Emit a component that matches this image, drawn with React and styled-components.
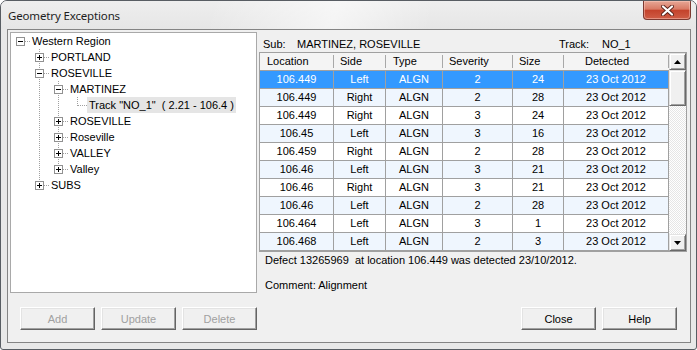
import React from "react";
import styled, { createGlobalStyle } from "styled-components";

const GlobalStyle = createGlobalStyle`
  html, body {
    margin: 0;
    padding: 0;
    background: #ffffff;
    overflow: hidden;
  }
  body {
    font-family: "Liberation Sans", Arial, sans-serif;
    font-size: 11px;
    color: #000;
  }
  * {
    box-sizing: border-box;
  }
`;

const Window = styled.div`
  width: 697px;
  height: 350px;
  border: 1px solid #585d63;
  border-radius: 7px 7px 3px 3px;
  background: #e8e8e8;
  display: flex;
  flex-direction: column;
  overflow: hidden;
`;

const TitleBar = styled.div`
  height: 28px;
  flex: none;
  display: flex;
  align-items: flex-start;
  justify-content: space-between;
  padding: 0 5px 0 7px;
  background: linear-gradient(
      105deg,
      rgba(255, 255, 255, 0) 30%,
      rgba(255, 255, 255, 0.55) 48%,
      rgba(255, 255, 255, 0) 62%
    ),
    linear-gradient(#eeeeee, #e6e6e6);
`;

const Title = styled.div`
  font-family: "Noto Sans", "Liberation Sans", sans-serif;
  font-size: 11.5px;
  letter-spacing: -0.15px;
  line-height: 29px;
  color: #1e1e1e;
`;

const CloseButton = styled.div`
  width: 48px;
  height: 19px;
  border: 1px solid #7d3a31;
  border-top: none;
  border-radius: 0 0 4px 4px;
  background: linear-gradient(#e7a796 0%, #d97a65 45%, #c4432c 52%, #cf5d46 100%);
  box-shadow: inset 0 0 0 1px rgba(255, 210, 200, 0.45);
  display: flex;
  align-items: center;
  justify-content: center;
`;

const Client = styled.div`
  flex: 1;
  margin: 0 5px 6px 6px;
  border: 1px solid #848484;
  background: #f0f0f0;
  padding: 2px 2px 0 2px;
  display: flex;
  flex-direction: column;
`;

const TopArea = styled.div`
  display: flex;
  height: 261px;
  gap: 2px;
`;

const TreePanel = styled.div`
  width: 247px;
  height: 261px;
  border: 1px solid #a9a9a9;
  background: #ffffff;
`;

const TreeRow = styled.div`
  display: flex;
  height: 16px;
  align-items: center;
`;

const TreeCell = styled.svg`
  flex: none;
  display: block;
`;

const TreeLabel = styled.span`
  line-height: 16px;
  padding: 0 2px;
  white-space: pre;
  background: ${(p) => (p.$selected ? "#e5e5e5" : "transparent")};
`;

const RightPanel = styled.div`
  width: 428px;
  display: flex;
  flex-direction: column;
`;

const SubRow = styled.div`
  height: 20px;
  padding: 4px 0 0 4px;
  line-height: 16px;
  display: grid;
  grid-template-columns: 34px 1fr 43px 85px;
`;

const Grid = styled.div`
  height: 200px;
  border: 1px solid #a0a0a0;
  display: flex;
`;

const Table = styled.div`
  width: 409px;
  display: grid;
  grid-template-columns: 74px 52px 57px 70px 51px 105px;
  grid-auto-rows: 18px;
`;

const HeadCell = styled.div`
  background: #f4f4f4;
  border-bottom: 1px solid #a0a0a0;
  padding-left: ${(p) => p.$pad || 6}px;
  line-height: 17px;
  position: relative;
  &::after {
    content: "";
    position: absolute;
    right: 0;
    top: 2px;
    bottom: 2px;
    width: 1px;
    background: #a8a8a8;
  }
`;

const Cell = styled.div`
  border-right: 1px solid #a0a0a0;
  border-bottom: 1px solid #a0a0a0;
  text-align: center;
  line-height: 17px;
  background: ${(p) => (p.$selected ? "#3399ff" : p.$alt ? "#eff6fe" : "#ffffff")};
  color: ${(p) => (p.$selected ? "#ffffff" : "#000")};
`;

const ScrollBar = styled.div`
  width: 17px;
  display: flex;
  flex-direction: column;
  background: repeating-conic-gradient(#ffffff 0 25%, #e6e6e6 0 50%) 0 0 / 2px 2px;
`;

const ScrollButton = styled.div`
  height: ${(p) => p.$h}px;
  flex: none;
  background: #f0f0f0;
  border: 1px solid;
  border-color: #e3e3e3 #696969 #696969 #e3e3e3;
  box-shadow: inset 1px 1px #ffffff, inset -1px -1px #a0a0a0;
  display: flex;
  align-items: center;
  justify-content: center;
`;

const ScrollTrack = styled.div`
  flex: 1;
`;

const InfoLine = styled.div`
  line-height: 16px;
  padding-left: 6px;
  margin-top: ${(p) => p.$mt || 0}px;
  white-space: pre;
`;

const ButtonRow = styled.div`
  display: flex;
  margin-top: 14px;
  padding: 0 11px 0 10px;
  gap: 6px;
`;

const Spacer = styled.div`
  flex: 1;
`;

const Button = styled.div`
  width: 75px;
  height: 23px;
  background: #f0f0f0;
  border: 1px solid;
  border-color: #ffffff #646464 #646464 #ffffff;
  box-shadow: inset -1px -1px #a0a0a0, inset 1px 1px #e3e3e3;
  color: ${(p) => (p.$disabled ? "#a0a0a0" : "#000")};
  display: flex;
  align-items: center;
  justify-content: center;
`;

const tree = [
  {
    label: "Western Region",
    open: true,
    children: [
      { label: "PORTLAND", children: [] },
      {
        label: "ROSEVILLE",
        open: true,
        children: [
          {
            label: "MARTINEZ",
            open: true,
            children: [{ label: 'Track "NO_1"  ( 2.21 - 106.4 )', selected: true }],
          },
          { label: "ROSEVILLE", children: [] },
          { label: "Roseville", children: [] },
          { label: "VALLEY", children: [] },
          { label: "Valley", children: [] },
        ],
      },
      { label: "SUBS", children: [] },
    ],
  },
];

function flatten(nodes, level, guides, out) {
  nodes.forEach((n, i) => {
    const last = i === nodes.length - 1;
    out.push({ ...n, level, last, guides });
    if (n.open && n.children) {
      flatten(n.children, level + 1, level === 0 ? [] : [...guides, !last], out);
    }
  });
  return out;
}

const DOT = "#a0a0a0";

function Guide({ line }) {
  return (
    <TreeCell width="19" height="16" shapeRendering="crispEdges">
      {line && <line x1="9.5" y1="0" x2="9.5" y2="16" stroke={DOT} strokeDasharray="1 1" />}
    </TreeCell>
  );
}

function Connector({ level, last, children, open }) {
  const box = !!children;
  return (
    <TreeCell width="19" height="16" shapeRendering="crispEdges">
      {level > 0 && (
        <line x1="9.5" y1="0" x2="9.5" y2={last ? 9 : 16} stroke={DOT} strokeDasharray="1 1" />
      )}
      <line x1={box ? 14 : 10} y1="8.5" x2="19" y2="8.5" stroke={DOT} strokeDasharray="1 1" />
      {box && (
        <>
          <rect x="5.5" y="4.5" width="8" height="8" fill="#fff" stroke="#919191" />
          <line x1="7" y1="8.5" x2="12" y2="8.5" stroke="#000" />
          {!open && <line x1="9.5" y1="6" x2="9.5" y2="11" stroke="#000" />}
        </>
      )}
    </TreeCell>
  );
}

const rows = [
  ["106.449", "Left", "2", "24"],
  ["106.449", "Right", "2", "28"],
  ["106.449", "Right", "3", "24"],
  ["106.45", "Left", "3", "16"],
  ["106.459", "Right", "2", "28"],
  ["106.46", "Left", "3", "21"],
  ["106.46", "Right", "3", "21"],
  ["106.46", "Left", "2", "28"],
  ["106.464", "Left", "3", "1"],
  ["106.468", "Left", "2", "3"],
];

const headers = [
  ["Location", 7],
  ["Side", 6],
  ["Type", 7],
  ["Severity", 6],
  ["Size", 6],
  ["Detected", 21],
];

function Arrow({ down }) {
  return (
    <svg width="7" height="4" viewBox="0 0 7 4">
      <polygon points={down ? "0,0 7,0 3.5,4" : "0,4 7,4 3.5,0"} fill="#000" />
    </svg>
  );
}

export default function App() {
  const flat = flatten(tree, 0, [], []);
  return (
    <>
      <GlobalStyle />
      <Window>
        <TitleBar>
          <Title>Geometry Exceptions</Title>
          <CloseButton>
            <svg width="13" height="11" viewBox="0 0 13 11">
              <path d="M2 1.5 L11 9.5 M11 1.5 L2 9.5" stroke="#5c241c" strokeWidth="4" strokeLinecap="round" />
              <path d="M2 1.5 L11 9.5 M11 1.5 L2 9.5" stroke="#ffffff" strokeWidth="2.2" strokeLinecap="round" />
            </svg>
          </CloseButton>
        </TitleBar>
        <Client>
          <TopArea>
            <TreePanel>
              {flat.map((n, i) => (
                <TreeRow key={i}>
                  {n.level > 0 && <Guide line={false} />}
                  {n.guides.map((g, j) => (
                    <Guide key={j} line={g} />
                  ))}
                  <Connector level={n.level} last={n.last} children={n.children} open={n.open} />
                  <TreeLabel $selected={n.selected}>{n.label}</TreeLabel>
                </TreeRow>
              ))}
            </TreePanel>
            <RightPanel>
              <SubRow>
                <span>Sub:</span>
                <span>MARTINEZ, ROSEVILLE</span>
                <span>Track:</span>
                <span>NO_1</span>
              </SubRow>
              <Grid>
                <Table>
                  {headers.map(([h, pad]) => (
                    <HeadCell key={h} $pad={pad}>
                      {h}
                    </HeadCell>
                  ))}
                  {rows.map((r, i) =>
                    [r[0], r[1], "ALGN", r[2], r[3], "23 Oct 2012"].map((v, j) => (
                      <Cell key={`${i}-${j}`} $selected={i === 0} $alt={i % 2 === 1}>
                        {v}
                      </Cell>
                    ))
                  )}
                </Table>
                <ScrollBar>
                  <ScrollButton $h={17}>
                    <Arrow />
                  </ScrollButton>
                  <ScrollButton $h={36} />
                  <ScrollTrack />
                  <ScrollButton $h={17}>
                    <Arrow down />
                  </ScrollButton>
                </ScrollBar>
              </Grid>
              <InfoLine>Defect 13265969  at location 106.449 was detected 23/10/2012.</InfoLine>
              <InfoLine $mt={9}>Comment: Alignment</InfoLine>
            </RightPanel>
          </TopArea>
          <ButtonRow>
            <Button $disabled>Add</Button>
            <Button $disabled>Update</Button>
            <Button $disabled>Delete</Button>
            <Spacer />
            <Button>Close</Button>
            <Button>Help</Button>
          </ButtonRow>
        </Client>
      </Window>
    </>
  );
}
